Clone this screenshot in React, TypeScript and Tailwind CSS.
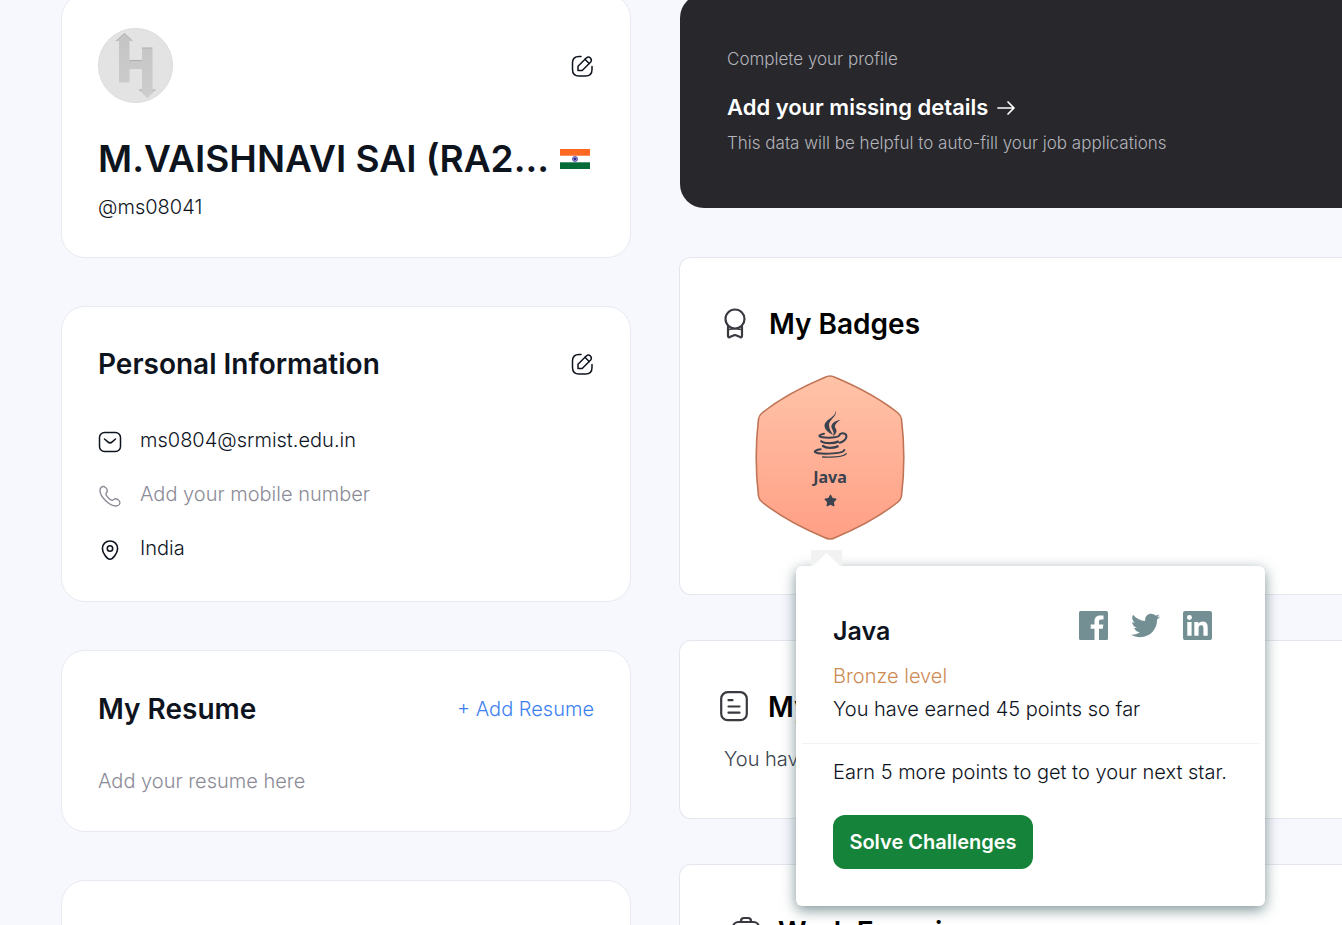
import React from "react";
import { FaTwitter } from "react-icons/fa";
import { FaStar } from "react-icons/fa6";

const stroke = {
  fill: "none",
  stroke: "currentColor",
  strokeLinecap: "round" as const,
  strokeLinejoin: "round" as const,
};

function EditIcon() {
  return (
    <svg viewBox="0 0 24 24" className="size-6" strokeWidth="1.5" {...stroke}>
      <path d="M11 2.500H9C4.500 2.500 2.500 4.500 2.500 9v6.500C2.500 20 4.500 22 9 22h6.500c4.500 0 6.500-2 6.500-6.500V12.500" />
      <path d="M8 16.500v-4.200l8.500-8.500a3 3 0 0 1 4.200 4.200l-8.500 8.500Z" />
      <path d="m15 5.300 4.200 4.200" />
    </svg>
  );
}

function MailIcon() {
  return (
    <svg viewBox="0 0 24 24" className="size-6" strokeWidth="1.5" {...stroke}>
      <rect x="1.500" y="2.500" width="21" height="19" rx="5" />
      <path d="m6.500 9 3.300 2.900a3.300 3.300 0 0 0 4.400 0L17.500 9" />
    </svg>
  );
}

function PhoneIcon() {
  return (
    <svg viewBox="0 0 24 24" className="size-6" strokeWidth="1.4" {...stroke}>
      <path d="M5.700 2.500c1.800.4 3.500 2.700 3.600 4.500.1 1.700-1.700 1.900-1.400 3.200.5 2.300 4.600 6.300 6.700 6 1.300-.2 1.700-1.800 3.300-1.400 1.800.4 4 2.200 4 4 0 1.700-2 3.200-4 3.200C11.200 22 2 12.600 2 6.500c0-2.200 1.600-4.400 3.700-4Z" />
    </svg>
  );
}

function PinIcon() {
  return (
    <svg viewBox="0 0 24 24" className="size-6" strokeWidth="1.6" {...stroke}>
      <path d="M12 3c-4.300 0-7.600 3.200-7.600 7.400 0 5 5 10.800 7.600 10.800s7.600-5.800 7.600-10.800C19.600 6.200 16.300 3 12 3Z" />
      <circle cx="12" cy="10.500" r="2.700" />
    </svg>
  );
}

function BadgeIcon() {
  return (
    <svg viewBox="0 0 24 32" className="h-8 w-6" strokeWidth="2.200" {...stroke}>
      <circle cx="12" cy="11" r="9.500" />
      <path d="M5 18.500v9.300q0 2 1.800 1.300l4.300-1.800q.9-.4 1.800 0l4.300 1.800q1.800.7 1.800-1.300v-9.300" />
      <path d="M6 21.500c3.500-.8 8.500-.8 12 0" strokeWidth="1.400" />
    </svg>
  );
}

function DocIcon() {
  return (
    <svg viewBox="0 0 28 32" className="h-8 w-7" strokeWidth="2.200" {...stroke}>
      <rect x="1.200" y="1.200" width="25.600" height="28" rx="6.500" />
      <path d="M8.500 9.200h4M8.500 15.500h11M8.500 21.700h11" />
    </svg>
  );
}

function BriefcaseIcon() {
  return (
    <svg viewBox="0 0 28 32" className="h-8 w-7" strokeWidth="2.200" {...stroke}>
      <rect x="1.200" y="6" width="25.600" height="22" rx="5" />
      <path d="M9 6V5c0-2 1-3 3-3h4c2 0 3 1 3 3v1M2 15c7 5 17 5 24 0" />
    </svg>
  );
}

function JavaIcon() {
  return (
    <svg viewBox="10 18 108 144" className="h-12 w-9" strokeWidth="6" {...stroke}>
      <path
        d="M81 19C87 38 61 46 61 63C61 75 68 83 73 93C56 85 45 74 48 61C53 45 82 40 81 19Z"
        fill="currentColor"
        stroke="none"
      />
      <path
        d="M96 47C77 50 65 60 69 72C72 80 78 84 73 97C85 87 86 80 80 72C76 62 84 56 96 47Z"
        fill="currentColor"
        stroke="none"
      />
      <path d="M46 89C24 94 28 101 60 101C76 101 88 99 92 95" />
      <path d="M93 91C105 84 117 91 112 102C109 109 101 114 93 116" />
      <path d="M38 112C48 119 76 119 88 113M43 126C52 133 74 133 87 127" strokeWidth="7" />
      <path d="M36 136C8 140 14 149 50 149C82 149 104 146 107 138" />
      <path d="M42 159C80 161 106 157 113 149" strokeWidth="4" />
    </svg>
  );
}

function Avatar() {
  return (
    <svg viewBox="0 0 75 75" className="size-[75px]" role="img" aria-label="Avatar">
      <defs>
        <linearGradient id="letter" x1="0" y1="0" x2="0" y2="1">
          <stop offset="0" stopColor="#c4c4c4" />
          <stop offset="1" stopColor="#cdcdcd" />
        </linearGradient>
      </defs>
      <circle cx="37.500" cy="37.500" r="37.200" fill="#e3e3e3" stroke="#cdcdcd" strokeWidth="0.500" />
      <path
        d="M26.500 5.500 34.500 13H31.500V32.500H44V20H54.500V62H57.500L49.500 70 41 62H44V41H31.500V54.500H21V13H18Z"
        fill="url(#letter)"
      />
      <path
        d="M18 13 26.500 5.500 34.500 13M31.500 32.500H44M44 20H54.500M41 62H44M54.500 62H57.500"
        fill="none"
        stroke="#adadad"
        strokeWidth="1"
      />
    </svg>
  );
}

function Flag() {
  return (
    <svg viewBox="0 0 30 20" className="h-5 w-[30px] shrink-0" role="img" aria-label="India">
      <path d="M0 0h30v20H0z" fill="#fff" />
      <path d="M0 0h30v6.700H0z" fill="#ff6820" />
      <path d="M0 13.300h30V20H0z" fill="#046a38" />
      <circle cx="15" cy="10" r="2.500" fill="#8d86cf" stroke="#4b429f" strokeWidth="0.800" />
      <circle cx="15" cy="10" r="1.100" fill="#1a1080" />
    </svg>
  );
}

function Facebook() {
  return (
    <svg viewBox="0 0 24 24" className="size-[29px]" fill="currentColor">
      <path d="M22.676 0H1.324C.593 0 0 .593 0 1.324v21.352C0 23.408.593 24 1.324 24h11.494v-9.294H9.689v-3.621h3.129V8.410c0-3.099 1.894-4.785 4.659-4.785 1.325 0 2.464.097 2.796.141v3.240h-1.921c-1.500 0-1.792.721-1.792 1.771v2.311h3.584l-.465 3.630H16.560V24h6.115c.733 0 1.325-.592 1.325-1.324V1.324C24 .593 23.408 0 22.676 0" />
    </svg>
  );
}

function Linkedin() {
  return (
    <svg viewBox="0 0 24 24" className="size-[29px]" fill="currentColor">
      <path d="M20.447 20.452h-3.554v-5.569c0-1.328-.027-3.037-1.852-3.037-1.853 0-2.136 1.445-2.136 2.939v5.667H9.351V9h3.414v1.561h.046c.477-.9 1.637-1.850 3.370-1.850 3.601 0 4.267 2.370 4.267 5.455v6.286zM5.337 7.433a2.062 2.062 0 0 1-2.063-2.065 2.064 2.064 0 1 1 2.063 2.065zm1.782 13.019H3.555V9h3.564v11.452zM22.225 0H1.771C.792 0 0 .774 0 1.729v20.542C0 23.227.792 24 1.771 24h20.451C23.200 24 24 23.227 24 22.271V1.729C24 .774 23.200 0 22.222 0h.003z" />
    </svg>
  );
}

function JavaBadge() {
  return (
    <div className="relative h-[166px] w-[150px]">
      <svg viewBox="0 0 150 166" className="absolute inset-0 size-full">
        <defs>
          <linearGradient id="bronze" x1="0" y1="0" x2="0" y2="1">
            <stop offset="0" stopColor="#ffc3a8" />
            <stop offset="1" stopColor="#ff9f85" />
          </linearGradient>
        </defs>
        <path
          d="M69.500 3.500Q75 .5 80.500 3.500C103 13 128 27 143 39Q146 41.500 146.500 45C149.500 70 149.500 97 146.500 122Q146 125.500 143 128C128 140 103 154 80.500 163.500Q75 166.500 69.500 163.500C47 154 22 140 7 128Q4 125.500 3.500 122C.5 97 .5 70 3.500 45Q4 41.500 7 39C22 27 47 13 69.500 3.500Z"
          fill="url(#bronze)"
          stroke="#c07456"
          strokeWidth="1.600"
        />
      </svg>
      <div className="relative flex flex-col items-center pt-9 text-[#39424e]">
        <JavaIcon />
        <span className="mt-[7px] font-['Noto_Sans'] text-base leading-6 font-bold">Java</span>
        <FaStar className="mt-[5px] size-[13px]" />
      </div>
    </div>
  );
}

function Popover() {
  return (
    <div
      role="dialog"
      aria-label="Java badge"
      className="absolute top-48 left-[41px] z-10 w-[469px] rounded-md bg-white pt-10 pb-[37px] shadow-[0_4px_14px_rgba(40,75,80,0.6)]"
    >
      <div className="absolute -top-4 left-[15px] h-4 w-[31px] bg-[#f2f2f2]">
        <svg viewBox="0 0 31 16" className="size-full">
          <path d="M2 16 15.500 3 29 16Z" fill="#fff" />
        </svg>
      </div>
      <div className="flex items-start justify-between pr-[53px] pl-[37px]">
        <h3 className="mt-[7px] text-[25px] leading-9 font-semibold">Java</h3>
        <div className="mt-[5px] flex gap-[23px] text-[#738f93]">
          <a href="#facebook" aria-label="Share on Facebook"><Facebook /></a>
          <a href="#twitter" aria-label="Share on Twitter"><FaTwitter className="size-[29px]" /></a>
          <a href="#linkedin" aria-label="Share on LinkedIn"><Linkedin /></a>
        </div>
      </div>
      <div className="mt-[11px] px-[37px] text-xl leading-[33px] font-light whitespace-nowrap">
        <p className="text-[#cd8b54]">Bronze level</p>
        <p>You have earned 45 points so far</p>
      </div>
      <hr className="mx-1.5 mt-[17px] border-[#f0f2f3]" />
      <div className="mt-3 px-[37px] text-xl leading-[33px] font-light whitespace-nowrap">
        <p>Earn 5 more points to get to your next star.</p>
        <button className="mt-[26px] h-[54px] w-[200px] rounded-xl bg-[#16833a] text-xl font-semibold text-white">
          Solve Challenges
        </button>
      </div>
    </div>
  );
}

function EditButton({ label }: { label: string }) {
  return (
    <button aria-label={label} className="flex">
      <EditIcon />
    </button>
  );
}

const card = "rounded-3xl border border-[#e8eaf2] bg-white px-9";
const panel = "rounded-l-xl border border-r-0 border-[#e4e6ed] bg-white pl-10";
const heading = "text-[28px] leading-10 font-semibold";

export default function App() {
  return (
    <main className="flex h-screen items-start gap-12 overflow-hidden bg-[#f7f8fd] pl-[61px] font-['Inter','Liberation_Sans',sans-serif] text-[#0e141e]">
      <div className="-mt-1.5 flex w-[570px] shrink-0 flex-col gap-12">
        <section className={card + " pt-[33px] pb-[34px]"}>
          <div className="flex items-center justify-between">
            <Avatar />
            <EditButton label="Edit profile" />
          </div>
          <div className="mt-7 flex items-center justify-between pr-1">
            <h1 className="text-[37px] leading-[56px] font-semibold whitespace-nowrap">M.VAISHNAVI SAI (RA2...</h1>
            <Flag />
          </div>
          <p className="mt-1 text-xl leading-8 font-light">@ms08041</p>
        </section>

        <section className={card + " pt-[37px] pb-[37px]"}>
          <div className="flex items-center justify-between">
            <h2 className={heading}>Personal Information</h2>
            <EditButton label="Edit personal information" />
          </div>
          <ul className="mt-10 flex flex-col gap-[22px] text-xl leading-8 font-light">
            <li className="flex items-center gap-[18px]">
              <span className="pt-1"><MailIcon /></span>ms0804@srmist.edu.in
            </li>
            <li className="flex items-center gap-[18px] text-[#8b8b97]">
              <span className="pt-1"><PhoneIcon /></span>Add your mobile number
            </li>
            <li className="flex items-center gap-[18px]">
              <span className="pt-1"><PinIcon /></span>India
            </li>
          </ul>
        </section>

        <section className={card + " pt-[38px] pb-[34px]"}>
          <div className="flex items-center justify-between">
            <h2 className={heading}>My Resume</h2>
            <a href="#resume" className="text-xl font-light text-[#3d7ff0]">+ Add Resume</a>
          </div>
          <p className="mt-9 text-xl leading-8 font-light text-[#8b8b97]">Add your resume here</p>
        </section>

        <section className={card + " h-40"} />
      </div>

      <div className="-mt-1.5 flex min-w-0 flex-1 flex-col">
        <section className="ml-px rounded-l-3xl bg-[#27272c] pt-[51px] pb-[51px] pl-[47px] text-[#b4b4bb]">
          <p className="text-[17px] leading-7 font-light">Complete your profile</p>
          <a href="#details" className="mt-4 flex items-center gap-2 text-[22px] leading-9 font-semibold text-white">
            Add your missing details
            <svg viewBox="0 0 20 20" className="size-5" strokeWidth="1.7" {...stroke}>
              <path d="M2 11h16M12 5l6 6-6 6" />
            </svg>
          </a>
          <p className="mt-1 text-[17px] leading-7 font-light">
            This data will be helpful to auto-fill your job applications
          </p>
        </section>

        <section className={panel + " mt-[49px] h-[338px] pt-[46px]"}>
          <div className="flex items-center gap-[22px] pl-[3px]">
            <span className="text-[#39393f]"><BadgeIcon /></span>
            <h2 className={heading + " text-black"}>My Badges</h2>
          </div>
          <div className="relative mt-[30px] ml-[35px] w-fit">
            <JavaBadge />
            <Popover />
          </div>
        </section>

        <section className={panel + " mt-[45px] h-[179px] pt-[46px]"}>
          <div className="flex items-center gap-5">
            <span className="text-[#39393f]"><DocIcon /></span>
            <h2 className={heading + " text-black"}>My Certifications</h2>
          </div>
          <p className="mt-4 pl-1 text-xl leading-8 font-light text-[#39424e]">You have not earned any certificates yet.</p>
        </section>

        <section className={panel + " mt-[45px] h-40 pt-[47px]"}>
          <div className="flex items-center gap-[18px] pl-3">
            <span className="text-[#39393f]"><BriefcaseIcon /></span>
            <h2 className={heading + " text-black"}>Work Experience</h2>
          </div>
        </section>
      </div>
    </main>
  );
}
